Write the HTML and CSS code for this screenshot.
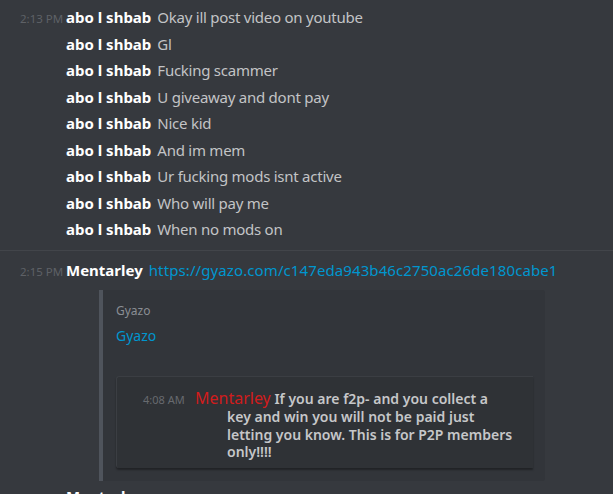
FILE: index.html
```html
<!DOCTYPE html>
<html lang="en">
<head>
  <meta charset="UTF-8">
  <title>Chat</title>
  <link rel="stylesheet" href="styles.css">
</head>
<body>

  <div class="chat">
    <div class="group">
      <div class="row"><span class="time">2:13 PM</span><span class="name">abo l shbab</span><span class="text">Okay ill post video on youtube</span></div>
      <div class="row"><span class="time"></span><span class="name">abo l shbab</span><span class="text">Gl</span></div>
      <div class="row"><span class="time"></span><span class="name">abo l shbab</span><span class="text">Fucking scammer</span></div>
      <div class="row"><span class="time"></span><span class="name">abo l shbab</span><span class="text">U giveaway and dont pay</span></div>
      <div class="row"><span class="time"></span><span class="name">abo l shbab</span><span class="text">Nice kid</span></div>
      <div class="row"><span class="time"></span><span class="name">abo l shbab</span><span class="text">And im mem</span></div>
      <div class="row"><span class="time"></span><span class="name">abo l shbab</span><span class="text">Ur fucking mods isnt active</span></div>
      <div class="row"><span class="time"></span><span class="name">abo l shbab</span><span class="text">Who will pay me</span></div>
      <div class="row"><span class="time"></span><span class="name">abo l shbab</span><span class="text">When no mods on</span></div>
    </div>

    <div class="divider"></div>

    <div class="group">
      <div class="row"><span class="time">2:15 PM</span><span class="name">Mentarley</span><a class="link" href="#">https://gyazo.com/c147eda943b46c2750ac26de180cabe1</a></div>

      <div class="embed">
        <div class="provider">Gyazo</div>
        <a class="embed-title" href="#">Gyazo</a>
        <div class="shot">
          <p class="shot-msg"><span class="shot-time">4:08 AM</span><span class="shot-name">Mentarley</span> If you are f2p- and you collect a<br>key and win you will not be paid just<br>letting you know. This is for P2P members<br>only!!!!</p>
        </div>
      </div>

      <div class="row"><span class="time"></span><span class="name">Mentarley</span></div>
    </div>
  </div>

</body>
</html>
```

FILE: styles.css
```css
body {
  margin: 0;
  background-color: #36393e;
  font-family: "Noto Sans", "Open Sans", sans-serif;
  overflow: hidden;
}

.chat {
  padding: 4px 0 0 20px;
}

.row {
  display: flex;
  align-items: baseline;
  height: 26.5px;
  line-height: 26.5px;
  white-space: nowrap;
}

.time {
  width: 46px;
  flex-shrink: 0;
  font-size: 11.5px;
  color: #5e6166;
}

.name {
  color: #ffffff;
  font-weight: 700;
  font-size: 15px;
  margin-right: 6px;
}

.text {
  color: #c3c4c6;
  font-size: 15px;
  letter-spacing: -0.25px;
}

.link {
  color: #0096cf;
  font-size: 15px;
  letter-spacing: 0.1px;
  text-decoration: none;
}

.divider {
  height: 1px;
  background-color: #42454a;
  margin: 7px 0 6px -20px;
}

.embed {
  width: 417px;
  margin: 7px 0 2px 79px;
  padding: 12px 12px 13px 13px;
  border-left: 4px solid #4f545c;
  border-radius: 0 3px 3px 0;
  background-color: #32353a;
}

.provider {
  font-size: 12px;
  color: #8a8e94;
  line-height: 18px;
}

.embed-title {
  display: block;
  margin-top: 6px;
  font-size: 14px;
  color: #0096cf;
  text-decoration: none;
  line-height: 20px;
}

.shot {
  margin-top: 30px;
  height: 78px;
  padding-top: 13px;
  background-color: #2f3236;
  border-top: 1px solid #3b3e43;
  border-left: 1px solid #3b3e43;
  border-radius: 3px 0 0 3px;
  box-shadow: 0 2px 2px rgba(0, 0, 0, 0.35);
}

.shot-msg {
  margin: 0;
  padding-left: 110px;
  text-indent: -84px;
  white-space: nowrap;
  font-size: 14px;
  font-weight: 600;
  line-height: 17.4px;
  color: #c6c7c9;
}

.shot-time {
  display: inline-block;
  width: 52px;
  text-indent: 0;
  font-size: 11px;
  font-weight: 400;
  color: #676a6f;
}

.shot-name {
  font-size: 16px;
  font-weight: 400;
  color: #d11c1c;
}
```
